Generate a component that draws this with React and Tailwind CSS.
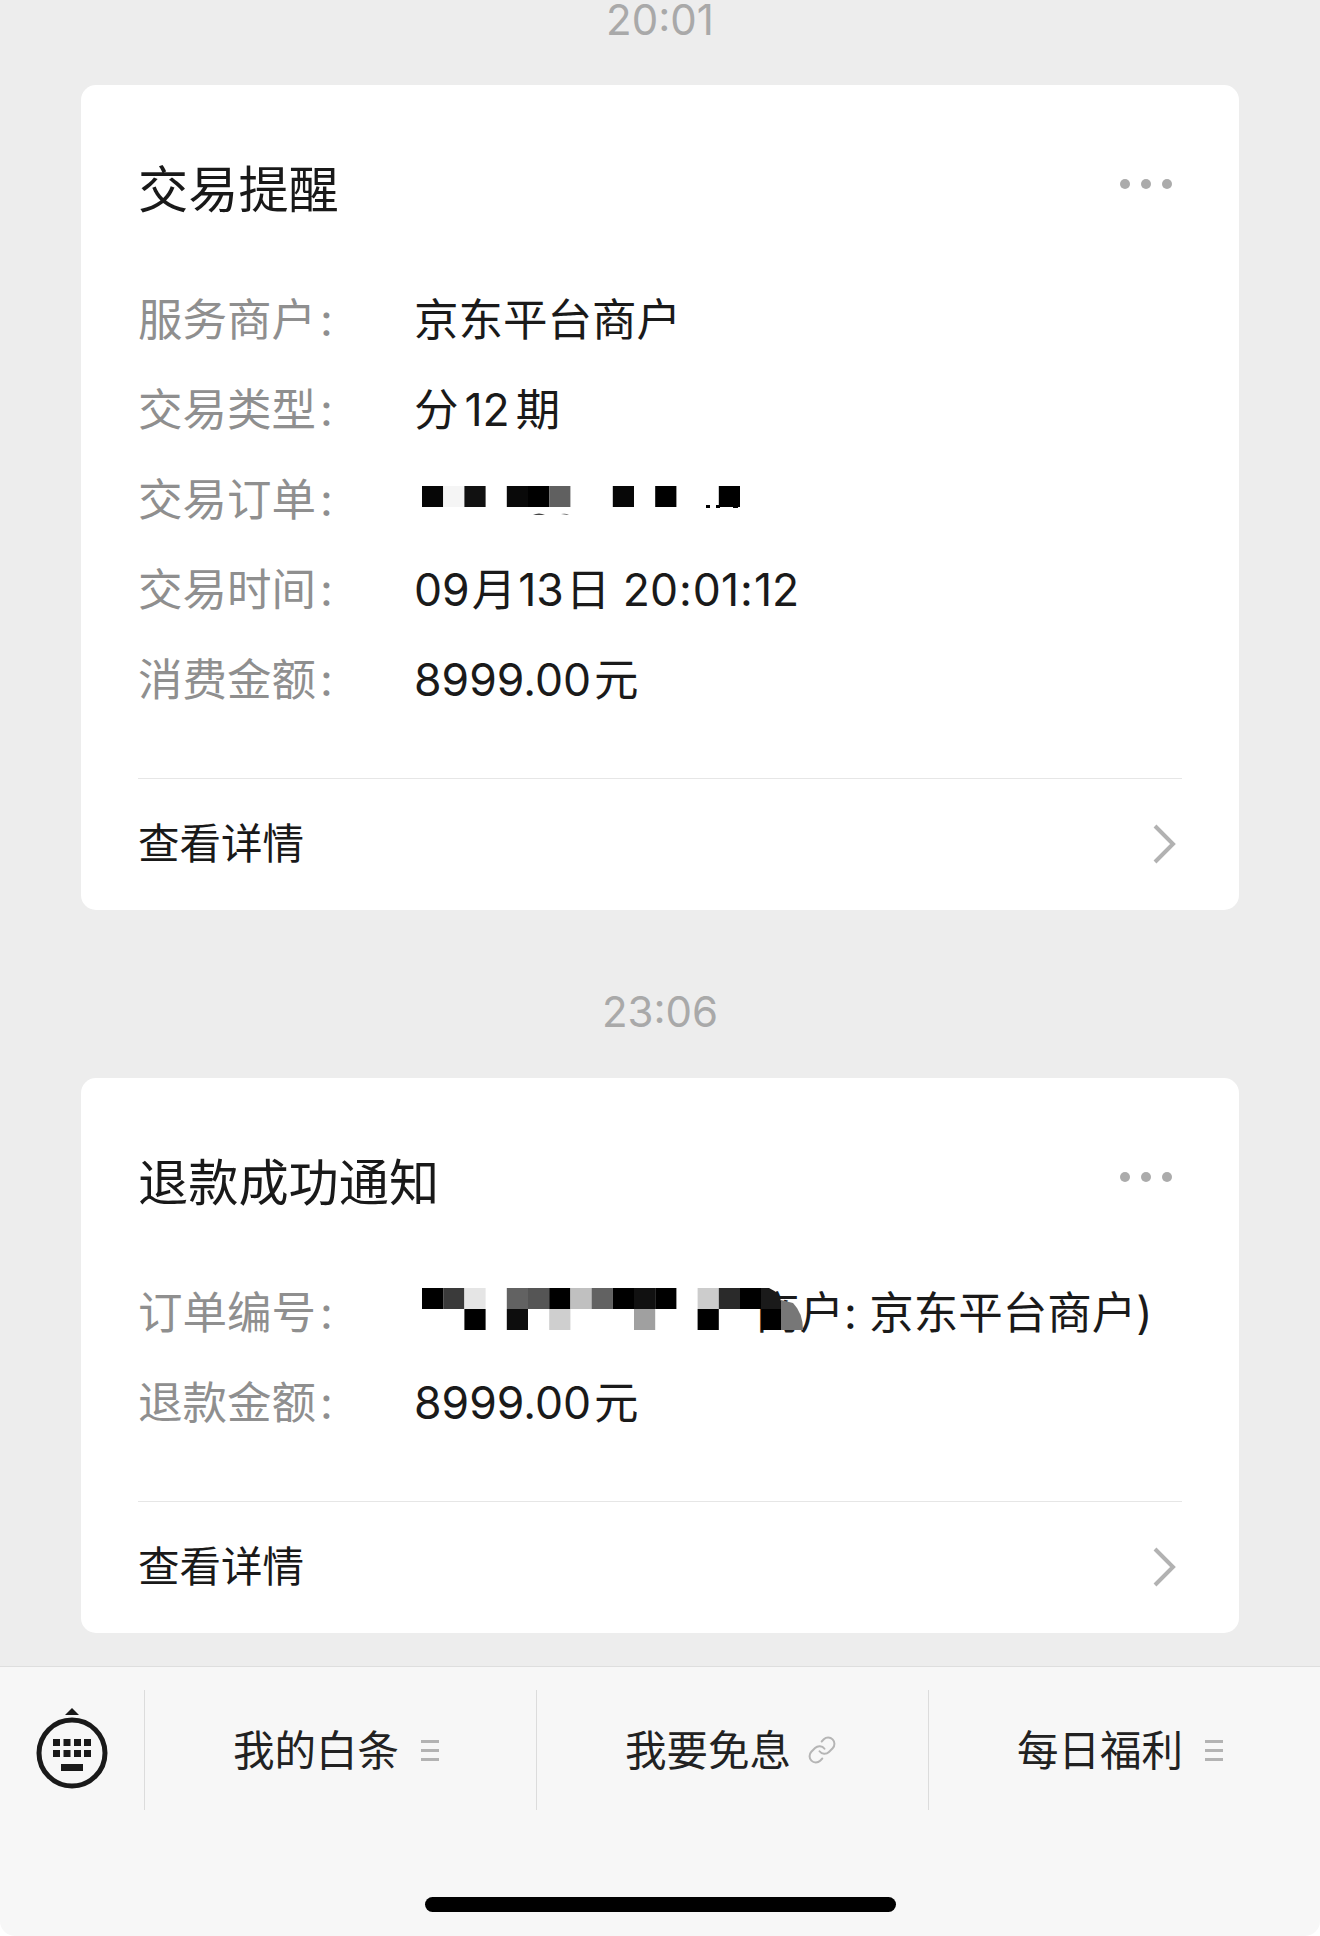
import { Link } from "lucide-react";

const FONT = "font-['Inter','Noto_Sans_CJK_SC',sans-serif]";

function Dots() {
  return (
    <div className="flex gap-[11px] mr-[10px] -mt-[12px]">
      <span className="w-[10px] h-[10px] rounded-full bg-[#ababab]" />
      <span className="w-[10px] h-[10px] rounded-full bg-[#ababab]" />
      <span className="w-[10px] h-[10px] rounded-full bg-[#ababab]" />
    </div>
  );
}

function Chevron() {
  return (
    <svg width="24" height="42" viewBox="0 0 24 42" className="mr-[6px] -mt-[2px]">
      <path d="M3 3 L21 21 L3 39" fill="none" stroke="#b2b2b2" strokeWidth="4" />
    </svg>
  );
}

function Row({ label, children }) {
  return (
    <div className="flex items-center h-[90px]">
      <div className="w-[277px] shrink-0 text-[44.5px] leading-none text-[#8f8f8f]">
        {label}
        <span className="ml-[4px]">:</span>
      </div>
      <div className="relative flex-1 -ml-px text-[44.5px] leading-none text-[#1a1a1a] whitespace-nowrap">{children}</div>
    </div>
  );
}

function Card({ title, rows }) {
  return (
    <div className="mx-[81px] rounded-[15px] bg-white px-[57px] pt-[75px]">
      <div className="flex items-center justify-between h-[60px]">
        <div className="text-[50.2px] leading-none text-[#191919]">{title}</div>
        <Dots />
      </div>
      <div className="mt-[55px] mb-[53px]">{rows}</div>
      <div className="h-px bg-[#e6e6e6]" />
      <div className="flex items-center justify-between h-[131px]">
        <div className="text-[41.5px] leading-none text-[#191919]">查看详情</div>
        <Chevron />
      </div>
    </div>
  );
}

function Mosaic1() {
  const c = 21.2;
  const cells = [
    [0, "#060606"],
    [1, "#f5f5f5"],
    [2, "#111111"],
    [4, "#090909"],
    [5, "#000000"],
    [6, "#606060"],
    [9, "#070707"],
    [11, "#000000"],
    [14, "#000000"],
  ];
  return (
    <svg width="340" height="90" viewBox="0 0 340 90" className="absolute left-[1px] top-[-23px]">
      {cells.map(([i, f]) => (
        <rect key={i} x={7 + i * c} y="31" width={c} height="21" fill={f} />
      ))}
      <rect x="291" y="50" width="4" height="3" fill="#000" />
      <rect x="301" y="50" width="4" height="3" fill="#000" />
      <rect x="318" y="50" width="5" height="3" fill="#000" />
      <path d="M118 60 Q124 57 130 60 Z M146 59 Q151 58 154 60 Z" fill="#444" />
    </svg>
  );
}

function Mosaic2() {
  const c = 21.2;
  const top = [
    [0, "#000000"],
    [1, "#3a3a3a"],
    [2, "#e5e5e5"],
    [4, "#626262"],
    [5, "#555555"],
    [6, "#000000"],
    [7, "#c0c0c0"],
    [8, "#626262"],
    [9, "#000000"],
    [10, "#111111"],
    [11, "#000000"],
    [13, "#cccccc"],
    [14, "#2a2a2a"],
    [15, "#000000"],
  ];
  const bottom = [
    [2, "#000000"],
    [4, "#0d0d0d"],
    [6, "#cfcfcf"],
    [10, "#a0a0a0"],
    [13, "#000000"],
    [16, "#000000"],
  ];
  return (
    <svg width="400" height="90" viewBox="0 0 400 90" className="absolute left-[1px] top-[-23px]">
      {top.map(([i, f]) => (
        <rect key={i} x={7 + i * c} y="20" width={c} height="21" fill={f} />
      ))}
      {bottom.map(([i, f]) => (
        <rect key={i} x={7 + i * c} y="41" width={c} height="21" fill={f} />
      ))}
      <path d="M346 20 H354 Q364 24 367 36 V41 H346 Z" fill="#1a1a1a" />
      <path d="M366 62 V32 L378 35 Q388 45 388 62 Z" fill="#777777" />
    </svg>
  );
}

function Chip({ label, icon }) {
  return (
    <div className="flex-1 flex items-center pl-[88px] gap-[22px] h-[120px] border-l border-[#dcdcdc]">
      <span className="mt-[3px] text-[41.5px] leading-none text-[#222222]">{label}</span>
      {icon}
    </div>
  );
}

function Burger() {
  return (
    <span className="flex flex-col gap-[6px] w-[18px]">
      <span className="h-[3px] bg-[#b3b3b3]" />
      <span className="h-[3px] bg-[#b3b3b3]" />
      <span className="h-[3px] bg-[#b3b3b3]" />
    </span>
  );
}

function KeyboardIcon() {
  const xs = [53, 63.5, 74, 84];
  return (
    <svg width="80" height="90" viewBox="32 1705 80 90" className="mx-auto">
      <path d="M72 1708 L79 1715 H65 Z" fill="#1a1a1a" />
      <circle cx="72" cy="1753" r="33" fill="none" stroke="#1a1a1a" strokeWidth="5" />
      {xs.map((x) => (
        <rect key={`a${x}`} x={x} y="1739" width="7" height="7" fill="#1a1a1a" />
      ))}
      {xs.map((x) => (
        <rect key={`b${x}`} x={x} y="1750" width="7" height="7" fill="#1a1a1a" />
      ))}
      <rect x="61" y="1764" width="22" height="7" fill="#1a1a1a" />
    </svg>
  );
}

export default function App() {
  return (
    <div className={`${FONT} w-[1320px] h-[1936px] overflow-hidden flex flex-col bg-white`}>
      <div className="flex-1 bg-[#ededed]">
        <div className="h-[40px] mb-[45px] flex items-center justify-center text-[42px] leading-none text-[#a9a9a9]">20:01</div>
        <Card
          title="交易提醒"
          rows={
            <>
              <Row label="服务商户">京东平台商户</Row>
              <Row label="交易类型">
                分<span className="ml-[6px] mr-[6px]">12</span>期
              </Row>
              <Row label="交易订单">
                <Mosaic1 />
                &nbsp;
              </Row>
              <Row label="交易时间">
                09<span className="mx-[2px]">月</span>13<span className="ml-[2px]">日</span> 20<span className="mx-[1px]">:</span>01<span className="mx-[1px]">:</span>12
              </Row>
              <Row label="消费金额">
                8999.00<span className="ml-[3px]">元</span>
              </Row>
            </>
          }
        />
        <div className="h-[50px] mt-[77px] mb-[41px] flex items-center justify-center text-[42px] leading-none text-[#a9a9a9]">23:06</div>
        <Card
          title="退款成功通知"
          rows={
            <>
              <Row label="订单编号">
                <span className="pl-[341px]">商户: 京东平台商户)</span>
                <Mosaic2 />
              </Row>
              <Row label="退款金额">
                8999.00<span className="ml-[3px]">元</span>
              </Row>
            </>
          }
        />
      </div>
      <div className="h-[270px] shrink-0 bg-[#f7f7f7] border-t border-[#dedede] rounded-b-[15px] pt-[23px]">
        <div className="flex items-center h-[120px]">
          <div className="w-[144px] shrink-0">
            <KeyboardIcon />
          </div>
          <Chip label="我的白条" icon={<Burger />} />
          <Chip label="我要免息" icon={<Link size={30} strokeWidth={1.6} color="#b5b5b5" className="-ml-[6px]" />} />
          <Chip label="每日福利" icon={<Burger />} />
        </div>
        <div className="mt-[87px] mx-auto w-[471px] h-[15px] rounded-full bg-black" />
      </div>
    </div>
  );
}
